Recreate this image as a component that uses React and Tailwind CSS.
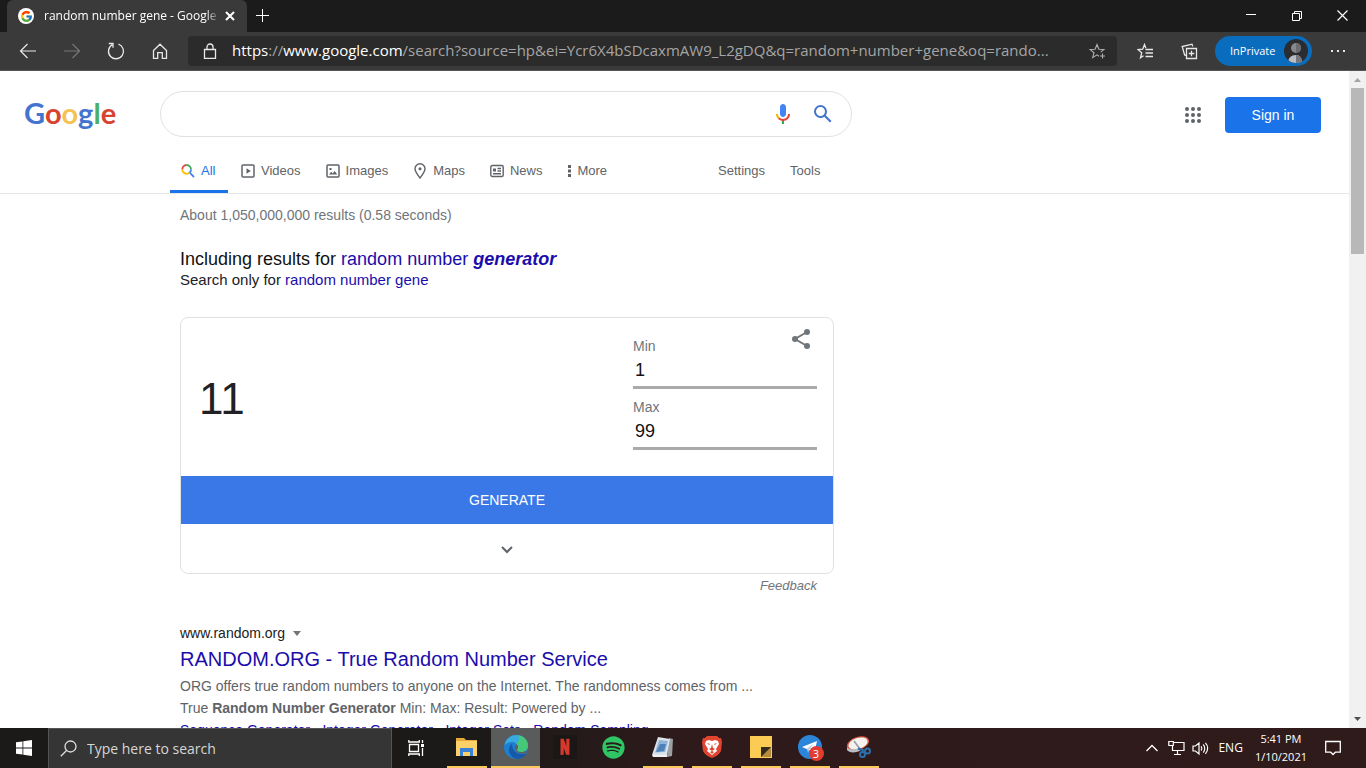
import { useState } from "react";
import { FcGoogle } from "react-icons/fc";
import { FaSpotify } from "react-icons/fa";
import { RiNetflixFill } from "react-icons/ri";
import { clsx } from "clsx";

/* ---------- browser chrome ---------- */

function IconButton({ label, className, children }) {
  return (
    <button
      type="button"
      aria-label={label}
      className={clsx("grid h-8 shrink-0 place-items-center", className)}
    >
      {children}
    </button>
  );
}

function Line({ size = 20, w = 1, className, children }) {
  return (
    <svg
      width={size}
      height={size}
      viewBox={`0 0 ${size} ${size}`}
      fill="none"
      stroke="currentColor"
      strokeWidth={w}
      className={className}
      aria-hidden
    >
      {children}
    </svg>
  );
}

function TabBar() {
  return (
    <div className="flex h-8 shrink-0 bg-[#1b1b1b] text-white">
      <div className="ml-[7px] flex w-60 items-center rounded-t-md bg-[#3a3a3a] pl-[11px] pr-[7px]">
        <span className="grid size-4 shrink-0 place-items-center rounded-full bg-white">
          <FcGoogle size={13} />
        </span>
        <span className="ml-[10px] flex-1 overflow-hidden whitespace-nowrap text-xs [mask-image:linear-gradient(to_right,black_92%,transparent)]">
          random number gene - Google Search
        </span>
        <IconButton label="Close tab" className="w-5">
          <Line size={10} w={2}>
            <path d="M1 1l8 8M9 1L1 9" />
          </Line>
        </IconButton>
      </div>
      <IconButton label="New tab" className="w-8">
        <Line size={14}>
          <path d="M6.500 0v13M0 6.500h13" />
        </Line>
      </IconButton>
      <div className="flex-1" />
      <IconButton label="Minimize" className="w-[46px]">
        <Line size={10}>
          <path d="M0 3.500h10" />
        </Line>
      </IconButton>
      <IconButton label="Restore" className="w-[46px]">
        <Line size={12}>
          <path d="M1.500 3.500h7v7h-7zM3.500 3.500V1.500h7v7H8.500" />
        </Line>
      </IconButton>
      <IconButton label="Close" className="w-[46px]">
        <Line size={12} w={1.2}>
          <path d="M.5 .5l10 10M10.500 .5l-10 10" />
        </Line>
      </IconButton>
    </div>
  );
}

function Toolbar() {
  return (
    <div className="flex h-[39px] shrink-0 items-center border-b border-[#555] bg-[#3a3a3a] text-[#e8e8e8]">
      <IconButton label="Back" className="ml-[6px] w-11">
        <Line size={18} w={1.2}>
          <path d="M17 9H1.500M8.500 2l-7 7 7 7" />
        </Line>
      </IconButton>
      <IconButton label="Forward" className="w-11 text-[#777]">
        <Line size={18} w={1.2}>
          <path d="M1 9h15.500M9.500 2l7 7-7 7" />
        </Line>
      </IconButton>
      <IconButton label="Refresh" className="w-11">
        <Line size={18} w={1.3}>
          <path d="M11.500 2.200a7.500 7.500 0 1 1-6.300.6M1.800 1.500h4.200v4.200" />
        </Line>
      </IconButton>
      <IconButton label="Home" className="w-11">
        <Line size={16} w={1.3}>
          <path d="M1.500 7.500L8 1.200l6.500 6.300v7.800h-4.200v-5.600H5.700v5.600H1.500z" />
        </Line>
      </IconButton>

      <div className="relative ml-[6px] flex h-[30px] min-w-0 flex-1 items-center rounded bg-[#2b2b2b] pl-[14px] pr-2">
        <Line size={16} w={1.3} className="shrink-0">
          <path d="M2.500 6.500h11v9h-11zM5 6.500V4a3 3 0 0 1 6 0v2.500" />
        </Line>
        <span className="ml-[14px] flex-1 overflow-hidden whitespace-nowrap pb-[2px] text-[15px] text-[#a5a5a5]">
          <span className="text-white">https</span>://
          <span className="text-white">www.google.com</span>
          /search?source=hp&amp;ei=Ycr6X4bSDcaxmAW9_L2gDQ&amp;q=random+number+gene&amp;oq=rando...
        </span>
        {/* editable layer above the two-tone address */}
        <input
          aria-label="Address bar"
          className="absolute inset-y-0 left-10 right-10 bg-transparent outline-none"
        />
        <IconButton label="Add to favorites" className="relative w-6 text-[#b0b0b0]">
          <Line size={17} w={1.1}>
            <path d="M10 13.200L8 11.900l-4.300 2.700L5 9.700 1.100 6.500l5-.3L8 1.500l1.900 4.700 5 .3-3.200 2.600M13.500 10.500v5M11 13h5" />
          </Line>
        </IconButton>
      </div>

      <IconButton label="Favorites" className="ml-2 w-10">
        <Line size={17} w={1.3}>
          <path d="M6.500 12.800l-3 2 1.200-5L.9 6.500l4.800-.3L7.500 1.500l1.400 3.700M8.500 6.500H16M8.500 10H16M8.500 13.500H16" />
        </Line>
      </IconButton>
      <IconButton label="Collections" className="ml-1 w-10">
        <Line size={17} w={1.3}>
          <path d="M5.500 5.500h10v10h-10zM10.500 7.800v5.500M7.800 10.500h5.500M5.500 12.500L3.600 12 1.200 3.500 11 1.200l.8 2.200" />
        </Line>
      </IconButton>
      <button
        type="button"
        className="ml-[6px] flex h-[30px] w-[97px] shrink-0 items-center justify-between rounded-full bg-[#0a6cbd] pl-[15px] pr-1 text-[11px] text-white"
      >
        InPrivate
        <svg width="24" height="24" viewBox="0 0 24 24" aria-hidden>
          <defs>
            <clipPath id="avatar">
              <circle cx="12" cy="12" r="12" />
            </clipPath>
          </defs>
          <circle cx="12" cy="12" r="12" fill="#2a2c30" />
          <g clipPath="url(#avatar)">
            <path d="M4 24c0-5 3-8 8-8 4 0 6 3 6 8z" fill="#b9bcc0" />
            <path d="M12 16c4 0 6 3 6 8h-6z" fill="#74777c" />
            <circle cx="12" cy="9" r="5" fill="#85888d" />
            <path d="M12 4a5 5 0 0 1 0 10z" fill="#696c71" />
          </g>
        </svg>
      </button>
      <IconButton label="Settings and more" className="ml-[6px] w-10">
        <svg width="16" height="4" viewBox="0 0 16 4" fill="currentColor" aria-hidden>
          <path d="M1 1h2v2H1zM7 1h2v2H7zM13 1h2v2h-2z" />
        </svg>
      </IconButton>
      <span className="w-2 shrink-0" />
    </div>
  );
}

/* ---------- search page ---------- */

const LOGO = [
  ["G", "text-[#4274d0]"],
  ["o", "text-[#d8432f]"],
  ["o", "text-[#f5c352]"],
  ["g", "text-[#4274d0]"],
  ["l", "text-[#4cae68]"],
  ["e", "text-[#d8432f]"],
];

function GoogleLogo() {
  return (
    <a href="#home" aria-label="Google" className="block pb-[3px] font-['Lato'] text-[29px] font-bold leading-9">
      {LOGO.map(([letter, color], i) => (
        <span key={i} className={color}>
          {letter}
        </span>
      ))}
    </a>
  );
}

function MicIcon() {
  return (
    <svg width="24" height="24" viewBox="0 0 24 24" aria-hidden>
      <path fill="#4285f4" d="M12 15c1.660 0 3-1.310 3-2.970V5.010C15 3.350 13.660 2 12 2S9 3.350 9 5.010v7.020C9 13.690 10.340 15 12 15z" />
      <path fill="#34a853" d="M11 18.080h2V22h-2z" />
      <path fill="#f4b400" d="M7.050 16.870c-1.270-1.330-2.050-2.830-2.050-4.870h2c0 1.450.56 2.420 1.470 3.380v.32l-1.150 1.180z" />
      <path fill="#ea4335" d="M12 16.930a4.970 4.970 0 0 1-3.540-1.550l-1.410 1.490c1.260 1.340 3.020 2.130 4.950 2.130 3.870 0 6.990-2.920 6.990-7h-1.990c0 2.920-2.240 4.930-5 4.930z" />
    </svg>
  );
}

function SearchIcon() {
  return (
    <svg width="24" height="24" viewBox="0 0 24 24" fill="#4274d0" aria-hidden>
      <path d="M20.490 19l-5.730-5.730C15.530 12.200 16 10.910 16 9.500A6.500 6.500 0 1 0 9.500 16c1.410 0 2.700-.47 3.770-1.240L19 20.490 20.490 19zM5 9.500C5 7.010 7.010 5 9.500 5S14 7.010 14 9.500 11.990 14 9.500 14 5 11.990 5 9.500z" />
    </svg>
  );
}

const NAV = [
  {
    label: "Videos",
    icon: (
      <Line size={14} w={1.5}>
        <rect x="1" y="1" width="12" height="12" rx="1" />
        <path d="M5.500 4.200v5.600L9.800 7z" fill="currentColor" stroke="none" />
      </Line>
    ),
  },
  {
    label: "Images",
    icon: (
      <Line size={14} w={1.5}>
        <rect x="1" y="1" width="12" height="12" rx="1" />
        <path d="M3 10.500l2.200-2.700 1.500 1.600 2-2.300 2.500 3.400z" fill="currentColor" stroke="none" />
        <path d="M3.500 4h2v2h-2z" fill="currentColor" stroke="none" />
      </Line>
    ),
  },
  {
    label: "Maps",
    icon: (
      <svg width="14" height="16" viewBox="0 0 14 16" fill="none" stroke="currentColor" strokeWidth="1.4" aria-hidden>
        <path d="M7 15C4 11 2 8.500 2 5.700a5 5 0 0 1 10 0C12 8.500 10 11 7 15z" />
        <circle cx="7" cy="5.700" r="1.500" fill="currentColor" stroke="none" />
      </svg>
    ),
  },
  {
    label: "News",
    icon: (
      <Line size={14} w={1.4}>
        <rect x=".8" y="1.500" width="12.400" height="11" rx="1.500" />
        <path d="M3 4.500h3v3H3z" fill="currentColor" stroke="none" />
        <path d="M7.500 4.500H11M7.500 7H11M3 9.800h8" />
      </Line>
    ),
  },
];

function SearchHeader() {
  const [query, setQuery] = useState("");
  return (
    <header className="border-b border-[#e6e6e6] pt-5">
      <div className="flex items-center">
        <div className="w-40 shrink-0 pl-6">
          <GoogleLogo />
        </div>
        <form
          role="search"
          onSubmit={(e) => e.preventDefault()}
          className="flex h-[46px] w-[692px] items-center rounded-full border border-[#dfe1e5] pl-5 pr-4"
        >
          <input
            type="text"
            aria-label="Search"
            value={query}
            onChange={(e) => setQuery(e.target.value)}
            className="min-w-0 flex-1 bg-transparent text-base outline-none"
          />
          <button type="button" aria-label="Search by voice">
            <MicIcon />
          </button>
          <button type="submit" aria-label="Google Search" className="ml-4">
            <SearchIcon />
          </button>
        </form>
        <div className="mt-[2px] flex flex-1 items-center justify-end">
          <button type="button" aria-label="Google apps" className="mr-6 text-[#5f6368]">
            <svg width="16" height="16" viewBox="0 0 16 16" fill="currentColor" aria-hidden>
              {[2, 8, 14].map((y) => [2, 8, 14].map((x) => <circle key={`${x}-${y}`} cx={x} cy={y} r="2" />))}
            </svg>
          </button>
          <a
            href="#signin"
            className="mr-7 grid h-9 w-24 place-items-center rounded bg-[#1a73e8] text-sm text-white"
          >
            Sign in
          </a>
        </div>
      </div>

      <nav className="ml-[170px] mt-[11px] flex h-[45px] text-[13px] text-[#5f6368]">
        <a
          href="#all"
          className="mr-[13px] flex w-[58px] items-center gap-[6px] border-b-3 border-[#1a73e8] pl-[11px] pt-[3px] text-[#1a73e8]"
        >
          <Line size={14} w={1.8}>
            <path d="M1.300 5.500A4.500 4.500 0 0 1 5.500 1" stroke="#ea4335" />
            <path d="M5.500 1A4.500 4.500 0 0 1 10 5.500" stroke="#34a853" />
            <path d="M10 5.500a4.500 4.500 0 0 1-1.300 3.100L13 13" stroke="#4285f4" />
            <path d="M8.700 8.600a4.500 4.500 0 0 1-7.500-3.100" stroke="#fbbc04" />
          </Line>
          All
        </a>
        <div className="flex gap-[25px]">
          {NAV.map((item) => (
            <a key={item.label} href={`#${item.label}`} className="flex items-center gap-[6px]">
              {item.icon}
              {item.label}
            </a>
          ))}
          <button type="button" className="flex items-center gap-[6px]">
            <svg width="4" height="12" viewBox="0 0 4 12" fill="currentColor" aria-hidden>
              <path d="M1 0h3v3H1zM1 4.500h3v3H1zM1 9h3v3H1z" />
            </svg>
            More
          </button>
        </div>
        <div className="ml-[111px] flex gap-[25px]">
          <button type="button">Settings</button>
          <button type="button">Tools</button>
        </div>
      </nav>
    </header>
  );
}

function NumberField({ id, label, value, onChange }) {
  return (
    <div className="flex flex-col">
      <label htmlFor={id} className="text-sm leading-5 text-[#70757a]">
        {label}
      </label>
      <input
        id={id}
        type="text"
        inputMode="numeric"
        value={value}
        onChange={(e) => onChange(e.target.value)}
        className="h-[33px] w-full border-b-3 border-[#aaa] bg-transparent px-[2px] pb-px text-lg text-[#111] outline-none"
      />
    </div>
  );
}

function GeneratorCard() {
  const [min, setMin] = useState("1");
  const [max, setMax] = useState("99");
  const [number, setNumber] = useState(11);

  function generate() {
    const lo = Number(min);
    const hi = Number(max);
    setNumber(lo + Math.floor(Math.random() * (hi - lo + 1)));
  }

  return (
    <section className="mt-[27px] overflow-hidden rounded-lg border border-[#dfe1e5]">
      <div className="flex h-[158px] items-start justify-between pl-[18px] pr-4">
        <output className="self-center pt-1 text-[44px] leading-none text-[#202124]">{number}</output>
        <div className="relative flex w-46 flex-col gap-2 pt-[18px]">
          <NumberField id="min" label="Min" value={min} onChange={setMin} />
          <NumberField id="max" label="Max" value={max} onChange={setMax} />
          <button type="button" aria-label="Share" className="absolute right-[6px] top-[10px] text-[#70757a]">
            <svg width="22" height="22" viewBox="0 0 22 22" fill="currentColor" aria-hidden>
              <path d="M18 4L6 11l12 7" fill="none" stroke="currentColor" strokeWidth="2" />
              <circle cx="18" cy="4" r="3" />
              <circle cx="6" cy="11" r="3" />
              <circle cx="18" cy="18" r="3" />
            </svg>
          </button>
        </div>
      </div>
      <button type="button" onClick={generate} className="block h-12 w-full bg-[#3b78e7] text-sm text-white">
        GENERATE
      </button>
      <button type="button" aria-label="Show more" className="grid h-[49px] w-full place-items-center text-[#5f6368]">
        <Line size={12} w={2}>
          <path d="M1 4l5 5 5-5" />
        </Line>
      </button>
    </section>
  );
}

function Results() {
  return (
    <main className="ml-[180px] w-[654px] text-sm text-[#70757a]">
      <p className="mt-[11px] leading-5">About 1,050,000,000 results (0.58 seconds)</p>

      <p className="mt-[22px] text-lg leading-6 text-[#111]">
        Including results for{" "}
        <a href="#generator" className="text-[#1a0dab]">
          random number <b className="italic">generator</b>
        </a>
      </p>
      <p className="-mt-px text-[15px] leading-5 text-[#202124]">
        Search only for{" "}
        <a href="#gene" className="text-[#1a0dab]">
          random number gene
        </a>
      </p>

      <GeneratorCard />
      <p className="mr-[17px] mt-[2px] text-right text-[13px] italic leading-5">
        <a href="#feedback">Feedback</a>
      </p>

      <article className="mt-[27px]">
        <p className="flex items-center gap-2 leading-5 text-[#202124]">
          www.random.org
          <svg width="8" height="5" viewBox="0 0 8 5" fill="#70757a" aria-hidden>
            <path d="M0 0h8L4 5z" />
          </svg>
        </p>
        <h3 className="mt-[2px] text-xl leading-7 text-[#1a0dab]">
          <a href="#random">RANDOM.ORG - True Random Number Service</a>
        </h3>
        <p className="mt-[2px] leading-[22px] text-[#5f6368]">
          ORG offers true random numbers to anyone on the Internet. The randomness comes from ...
          <br />
          True <b>Random Number Generator</b> Min: Max: Result: Powered by ...
        </p>
        <p className="leading-[22px] text-[#1a0dab]">
          <a href="#seq">Sequence Generator</a> · <a href="#int">Integer Generator</a> ·{" "}
          <a href="#sets">Integer Sets</a> · <a href="#sampling">Random Sampling</a>
        </p>
      </article>
    </main>
  );
}

function Scrollbar() {
  return (
    <div aria-hidden className="flex w-[17px] shrink-0 flex-col items-center bg-[#f1f1f1]">
      <svg width="17" height="17" viewBox="0 0 17 17" fill="#a3a3a3">
        <path d="M5 11h7L8.500 7z" />
      </svg>
      <div className="h-[166px] w-[13px] bg-[#b8b8b8]" />
      <div className="flex-1" />
      <svg width="17" height="17" viewBox="0 0 17 17" fill="#505050">
        <path d="M5 6h7l-3.500 4z" />
      </svg>
    </div>
  );
}

/* ---------- taskbar ---------- */

const APPS = [
  {
    name: "File Explorer",
    open: true,
    icon: (
      <svg width="24" height="24" viewBox="0 0 24 24">
        <path d="M1 3h8l2 2h11v16H1z" fill="#e9a93a" />
        <path d="M1 6h21v15H1z" fill="#fbd068" />
        <path d="M5 13h13v8h-3v-4H8v4H5z" fill="#3b82d6" />
      </svg>
    ),
  },
  {
    name: "Microsoft Edge",
    open: true,
    active: true,
    icon: (
      <svg width="26" height="26" viewBox="0 0 26 26">
        <circle cx="13" cy="13" r="12" fill="#1e7fd0" />
        <path d="M1.500 11C3 4.500 8 1 13 1c7 0 12 5 12 10.500 0 4-3 6.500-7 6.500-2.500 0-4-1-4-2 0-.8 1-1.300 1-3 0-3-3-5-6-5-3.500 0-6 1.500-7.500 3z" fill="#39a9e0" />
        <path d="M15 1.200c6 .8 10 5.300 10 10.300 0 4-3 6.500-7 6.500-2.500 0-4-1-4-2 0-.8 1-1.300 1-3 0-1.500-.7-2.800-1.800-3.700C16 8 17 4 15 1.200z" fill="#45c877" />
        <path d="M9 10c-3 2-4 6-2 10 1.600 3 4.500 4.700 8 5 4-.5 7-2.700 8.500-5.500C16 22 9 18 9 10z" fill="#1559a8" />
        <path d="M13.200 10.500c-2 2-2 6 1.800 8.200 3 1.500 6 1 8.500-.3l1-2.400c-1.500 1.500-4 2-6.500 2-2.500 0-4-1-4-2 0-.8 1-1.300 1-3 0-1-.7-2-1.800-2.500z" fill="#5e6064" />
      </svg>
    ),
  },
  {
    name: "Netflix",
    icon: (
      <span className="grid size-6 place-items-center bg-[#1b1717]">
        <RiNetflixFill size={18} color="#d6382c" />
      </span>
    ),
  },
  { name: "Spotify", icon: <FaSpotify size={23} color="#2fc464" /> },
  {
    name: "Notes",
    open: true,
    icon: (
      <svg width="24" height="24" viewBox="0 0 24 24">
        <path d="M18 3l4 1-1 17-5 1z" fill="#9a9fa4" />
        <path d="M7 2l12 2-3 16H1z" fill="#dbe3ea" />
        <path d="M8 5l9 1-3 11-10 .5z" fill="#8fb4d8" />
        <path d="M9 9l6 0-2 7-8 1z" fill="#4f83b8" />
        <path d="M1 20h15v2H2z" fill="#f1f1f1" />
      </svg>
    ),
  },
  {
    name: "Brave",
    open: true,
    icon: (
      <svg width="22" height="24" viewBox="0 0 22 24">
        <path d="M6 1h10l2 2h2l1 4-1 9c-2 4-6 6-9 7-3-1-7-3-9-7L1 7l1-4h2z" fill="#e2452f" />
        <path d="M5 6l3-1 3 1 3-1 3 1 1 3-3 5 1 2-5 4-5-4 1-2-3-5z" fill="#fff" />
        <path d="M6 8l3 1-1 1zM16 8l-3 1 1 1zM11 9l1 4 2 1-3 2-3-2 2-1z" fill="#e2452f" />
        <path d="M9 17l2-1 2 1-2 2z" fill="#e2452f" />
      </svg>
    ),
  },
  {
    name: "Sticky Notes",
    open: true,
    icon: (
      <svg width="22" height="22" viewBox="0 0 22 22">
        <path d="M0 0h22v22H0z" fill="#fbcb54" />
        <path d="M11 11h10v10H11z" fill="#b58c3a" />
        <path d="M11 11h10L11 21z" fill="#332b1c" />
      </svg>
    ),
  },
  {
    name: "Telegram",
    open: true,
    badge: "3",
    icon: (
      <svg width="24" height="24" viewBox="0 0 24 24">
        <circle cx="12" cy="12" r="12" fill="#2b86d9" />
        <path d="M4 12l15-6-3 13-5-4z" fill="#fff" />
        <path d="M9 13.500L16 8.500 11 15l-1 3z" fill="#b8d4ee" />
      </svg>
    ),
  },
  {
    name: "Snipping Tool",
    open: true,
    icon: (
      <svg width="26" height="24" viewBox="0 0 26 24">
        <ellipse cx="12" cy="8.500" rx="11.500" ry="6.500" transform="rotate(-18 12 8.500)" fill="#d8563f" />
        <ellipse cx="12" cy="8.500" rx="10" ry="5.500" transform="rotate(-18 12 8.500)" fill="#f5f2f0" />
        <path d="M1 12c2 3 7 3 12 1l1 3c-5 2-11 2-13-1z" fill="#b9bcc0" />
        <path d="M8 6l6 8" stroke="#9a9da0" strokeWidth="1.5" />
        <g fill="none" stroke="#2b6fae" strokeWidth="2">
          <path d="M12 13.500l6 2" />
          <circle cx="16.500" cy="19.500" r="2.500" />
          <circle cx="21.500" cy="16" r="2.500" />
        </g>
      </svg>
    ),
  },
];

function Taskbar() {
  return (
    <footer className="flex h-10 shrink-0 bg-linear-to-r from-[#1c1919] from-35% via-[#2e1a1a] via-50% to-[#301b1b] text-white">
      <button type="button" aria-label="Start" className="grid w-12 shrink-0 place-items-center">
        <svg width="16" height="16" viewBox="0 0 16 16" fill="#fff" aria-hidden>
          <path d="M0 2.300l6.500-.9v6.100H0zM7.300 1.300L16 0v7.500H7.300zM0 8.400h6.500v6.200L0 13.700zM7.300 8.400H16V16l-8.700-1.200z" />
        </svg>
      </button>
      <label className="flex w-86 shrink-0 items-center gap-[10px] border border-b-0 border-[#555] bg-[#353535] pl-[11px]">
        <Line size={17} w={1.3} className="shrink-0 text-[#ddd]">
          <circle cx="10.500" cy="6.500" r="5.500" />
          <path d="M6.500 10.500L.8 16.200" />
        </Line>
        <input
          type="text"
          aria-label="Type here to search"
          placeholder="Type here to search"
          className="min-w-0 flex-1 bg-transparent text-sm outline-none placeholder:text-[#d6d6d6]"
        />
      </label>
      <button type="button" aria-label="Task View" className="grid w-[50px] shrink-0 place-items-center pr-[2px]">
        <Line size={16} w={1.3}>
          <path d="M1.500 4.500h9v7h-9zM.8 0v2h10.500V0M.8 16v-2h10.500v2M14.500 0v3M14.500 8v8" />
          <path d="M13 4h3v3h-3z" fill="currentColor" stroke="none" />
        </Line>
      </button>

      {APPS.map((app) => (
        <button
          key={app.name}
          type="button"
          aria-label={app.name}
          className={clsx(
            "flex w-[49px] shrink-0 flex-col items-center",
            app.active && "bg-[#5a5b5b]"
          )}
        >
          <span className="relative grid flex-1 place-items-center">
            {app.icon}
            {app.badge && (
              <span className="absolute -right-[2px] bottom-[5px] grid size-[15px] place-items-center rounded-full bg-[#e03c31] text-[11px] leading-none">
                {app.badge}
              </span>
            )}
          </span>
          <span
            className={clsx(
              "h-[2px]",
              app.active ? "w-full" : "w-10",
              app.open && "bg-[#fbc95c]"
            )}
          />
        </button>
      ))}

      <div className="flex-1" />
      <div className="flex items-center pr-[25px]">
        <button type="button" aria-label="Show hidden icons">
          <Line size={12} w={1.3}>
            <path d="M.5 9L6 3.500 11.500 9" />
          </Line>
        </button>
        <Line size={17} w={1.2} className="ml-[10px]">
          <path d="M6 2.500h10v8H4.500V6M9.500 10.500v3.500M6 14.500h7M.8 1.500h4.500v4H.8z" />
        </Line>
        <Line size={17} w={1.2} className="ml-[7px]">
          <path d="M1 6h2.500L7 3v11l-3.500-3H1zM9 6.500c1 1 1 3 0 4M11.200 4.500c2 2 2 6 0 8M13.400 2.800c3 3 3 8 0 11" />
        </Line>
        <span className="ml-[9px] text-xs">ENG</span>
        <div className="ml-3 text-center text-[11px] leading-[18px]">
          <div>5:41 PM</div>
          <div>1/10/2021</div>
        </div>
        <button type="button" aria-label="Notifications" className="ml-[18px]">
          <Line size={16} w={1.3}>
            <path d="M.7 1.500h14.600v10.700h-5L8 14.500l-2.300-2.300h-5z" />
          </Line>
        </button>
      </div>
    </footer>
  );
}

export default function App() {
  return (
    <div className="flex h-screen flex-col overflow-hidden bg-white font-['Open_Sans','Noto_Sans',sans-serif]">
      <TabBar />
      <Toolbar />
      <div className="flex min-h-0 flex-1 font-['Liberation_Sans',Arial,sans-serif]">
        <div className="min-w-0 flex-1 overflow-hidden">
          <SearchHeader />
          <Results />
        </div>
        <Scrollbar />
      </div>
      <Taskbar />
    </div>
  );
}
